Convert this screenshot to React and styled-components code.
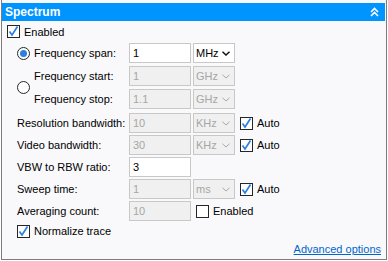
import React from "react";
import styled, { createGlobalStyle } from "styled-components";

const GlobalStyle = createGlobalStyle`
  html, body {
    margin: 0;
    padding: 0;
    background: #ffffff;
  }
  body {
    font-family: "Liberation Sans", Arial, sans-serif;
    font-size: 11px;
    color: #000;
  }
`;

const Panel = styled.div`
  box-sizing: border-box;
  width: 386px;
  height: 260px;
  margin: 0 1px;
  padding: 3px 1px 0 0;
  border: 1px solid #7d7d7d;
  border-top: none;
  background: #f9f9fb;
  display: flex;
  flex-direction: column;
`;

const Header = styled.div`
  height: 18px;
  background: #0094ff;
  color: #fff;
  font-weight: bold;
  font-size: 12px;
  padding: 0 6px 0 3px;
  display: flex;
  align-items: center;
  justify-content: space-between;
`;

const Body = styled.div`
  flex: 1;
  display: flex;
  flex-direction: column;
  padding: 0 4px 0 5px;
`;

const Indent = styled.div`
  display: flex;
  flex-direction: column;
  padding-left: 10px;
`;

const Row = styled.div`
  height: ${(p) => p.$h || 22}px;
  display: flex;
  align-items: center;
  margin-bottom: ${(p) => p.$mb || 0}px;
`;

const Label = styled.span`
  width: ${(p) => p.$w || 112}px;
  flex: none;
  white-space: nowrap;
`;

const TextBox = styled.input`
  box-sizing: border-box;
  width: 62px;
  height: 20px;
  margin: 0;
  padding: 0 3px;
  border: 1px solid #c8c8c8;
  background: ${(p) => (p.disabled ? "#f0f0f0" : "#ffffff")};
  color: ${(p) => (p.disabled ? "#a6a6a6" : "#000")};
  font-family: inherit;
  font-size: 11px;
  outline: none;
`;

const SelectBox = styled.div`
  box-sizing: border-box;
  width: 42px;
  height: 20px;
  margin-left: 2px;
  padding: 0 4px 0 2px;
  border: 1px solid #c8c8c8;
  background: ${(p) => (p.$disabled ? "#f0f0f0" : "#ffffff")};
  color: ${(p) => (p.$disabled ? "#a6a6a6" : "#000")};
  display: flex;
  align-items: center;
  justify-content: space-between;
`;

const CheckWrap = styled.label`
  display: flex;
  align-items: center;
  gap: 4px;
  margin-left: ${(p) => p.$ml || 0}px;
  white-space: nowrap;
`;

const Box = styled.span`
  box-sizing: border-box;
  width: 13px;
  height: 13px;
  border: 1px solid #262626;
  background: #fff;
  display: flex;
  align-items: center;
  justify-content: center;
  flex: none;
`;

const RadioCircle = styled.span`
  box-sizing: border-box;
  width: 13px;
  height: 13px;
  border-radius: 50%;
  border: 1px solid #262626;
  background: #fff;
  display: flex;
  align-items: center;
  justify-content: center;
  flex: none;
  margin-right: 4px;

  &::after {
    content: "";
    display: ${(p) => (p.$on ? "block" : "none")};
    width: 7px;
    height: 7px;
    border-radius: 50%;
    background: #2a7fe0;
  }
`;

const RadioGroup = styled.div`
  display: flex;
  align-items: center;
  margin-bottom: 2px;
`;

const Stack = styled.div`
  display: flex;
  flex-direction: column;
  gap: 1px;
`;

const Footer = styled.div`
  height: 18px;
  display: flex;
  align-items: center;
  justify-content: flex-end;
`;

const Link = styled.a`
  color: #0066cc;
  text-decoration: underline;
  cursor: pointer;
`;

const Chevron = ({ disabled }) => (
  <svg width="8" height="5" viewBox="0 0 8 5">
    <path
      d="M0.5 0.8 L4 4 L7.5 0.8"
      fill="none"
      stroke={disabled ? "#a8a8a8" : "#111"}
      strokeWidth={disabled ? 1 : 1.5}
    />
  </svg>
);

const CollapseIcon = () => (
  <svg width="9" height="10" viewBox="0 0 9 10">
    <path d="M1 5 L4.5 1.5 L8 5 M1 9 L4.5 5.5 L8 9" fill="none" stroke="#fff" strokeWidth="1.6" />
  </svg>
);

const CheckBox = ({ checked, label, ml }) => (
  <CheckWrap $ml={ml}>
    <Box>
      {checked && (
        <svg width="11" height="11" viewBox="0 0 11 11">
          <path d="M1.5 5.5 L4 9 L9.5 0.5" fill="none" stroke="#2a7fe0" strokeWidth="1.7" />
        </svg>
      )}
    </Box>
    {label}
  </CheckWrap>
);

const Select = ({ value, disabled }) => (
  <SelectBox $disabled={disabled}>
    <span>{value}</span>
    <Chevron disabled={disabled} />
  </SelectBox>
);

export default function App() {
  return (
    <>
      <GlobalStyle />
      <Panel>
        <Header>
          <span>Spectrum</span>
          <CollapseIcon />
        </Header>
        <Body>
          <Row $h={21}>
            <CheckBox checked label="Enabled" />
          </Row>
          <Indent>
            <Row $mb={1}>
              <RadioCircle $on />
              <Label $w={95}>Frequency span:</Label>
              <TextBox defaultValue="1" />
              <Select value="MHz" />
            </Row>
            <RadioGroup>
              <RadioCircle />
              <Stack>
                <Row>
                  <Label $w={95}>Frequency start:</Label>
                  <TextBox defaultValue="1" disabled />
                  <Select value="GHz" disabled />
                </Row>
                <Row>
                  <Label $w={95}>Frequency stop:</Label>
                  <TextBox defaultValue="1.1" disabled />
                  <Select value="GHz" disabled />
                </Row>
              </Stack>
            </RadioGroup>
            <Row>
              <Label>Resolution bandwidth:</Label>
              <TextBox defaultValue="10" disabled />
              <Select value="KHz" disabled />
              <CheckBox checked label="Auto" ml={5} />
            </Row>
            <Row>
              <Label>Video bandwidth:</Label>
              <TextBox defaultValue="30" disabled />
              <Select value="KHz" disabled />
              <CheckBox checked label="Auto" ml={5} />
            </Row>
            <Row>
              <Label>VBW to RBW ratio:</Label>
              <TextBox defaultValue="3" />
            </Row>
            <Row>
              <Label>Sweep time:</Label>
              <TextBox defaultValue="1" disabled />
              <Select value="ms" disabled />
              <CheckBox checked label="Auto" ml={5} />
            </Row>
            <Row>
              <Label>Averaging count:</Label>
              <TextBox defaultValue="10" disabled />
              <CheckBox label="Enabled" ml={5} />
            </Row>
            <Row $h={18}>
              <CheckBox checked label="Normalize trace" />
            </Row>
          </Indent>
          <Footer>
            <Link>Advanced options</Link>
          </Footer>
        </Body>
      </Panel>
    </>
  );
}
